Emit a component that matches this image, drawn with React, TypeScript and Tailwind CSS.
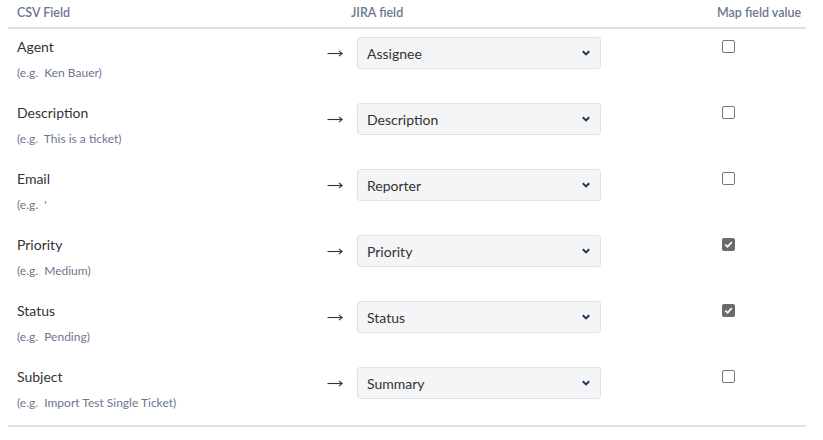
import React from "react";

type Row = {
  csv: string;
  example: string;
  jira: string;
  mapValue: boolean;
};

const rows: Row[] = [
  { csv: "Agent", example: "(e.g.  Ken Bauer)", jira: "Assignee", mapValue: false },
  { csv: "Description", example: "(e.g.  This is a ticket)", jira: "Description", mapValue: false },
  { csv: "Email", example: "(e.g.  '", jira: "Reporter", mapValue: false },
  { csv: "Priority", example: "(e.g.  Medium)", jira: "Priority", mapValue: true },
  { csv: "Status", example: "(e.g.  Pending)", jira: "Status", mapValue: true },
  { csv: "Subject", example: "(e.g.  Import Test Single Ticket)", jira: "Summary", mapValue: false },
];

const Checkbox = ({ checked }: { checked: boolean }) =>
  checked ? (
    <span className="flex h-[13px] w-[13px] items-center justify-center rounded-[2px] bg-[#6a6a6a]">
      <svg width="9" height="9" viewBox="0 0 10 10">
        <path d="M1.5 5.2 L4 7.6 L8.6 2.4" fill="none" stroke="#fff" strokeWidth="1.9" />
      </svg>
    </span>
  ) : (
    <span className="block h-[13px] w-[13px] rounded-[2px] border border-[#767676] bg-white" />
  );

const Select = ({ value }: { value: string }) => (
  <div className="flex h-[32px] w-[244px] items-center justify-between rounded-[3px] border border-[#dfe1e6] bg-[#f4f5f7] pl-[9px] pr-[9px] text-[14px] text-[#333]">
    <span>{value}</span>
    <svg width="10" height="8" viewBox="0 0 10 8">
      <path d="M1.8 2.2 L5 5.4 L8.2 2.2" fill="none" stroke="#253858" strokeWidth="2" />
    </svg>
  </div>
);

export default function App() {
  return (
    <div
      className="h-[440px] w-[823px] bg-white"
      style={{ fontFamily: '"Segoe UI", Lato, "Noto Sans", sans-serif' }}
    >
      <div className="ml-2 w-[798px]">
        <div className="flex h-[29px] items-center border-b-2 border-[#dfe1e6] text-[12.5px] font-semibold text-[#6b778c]">
          <div className="w-[334px] pl-[9px]">CSV Field</div>
          <div className="w-[366px] pl-[9px]">JIRA field</div>
          <div className="pl-[9px]">Map field value</div>
        </div>
        <div className="border-b-2 border-[#dfe1e6]">
          {rows.map((r) => (
            <div key={r.csv} className="flex h-[66px] items-start pt-[8px]">
              <div className="w-[311px] pl-[9px]">
                <div className="text-[14px] leading-[20px] text-[#333]">{r.csv}</div>
                <div className="mt-[8px] whitespace-pre text-[12px] leading-[16px] text-[#6b778c]">
                  {r.example}
                </div>
              </div>
              <div className="flex h-[32px] w-[38px] items-center pl-[8px]">
                <svg width="16" height="8" viewBox="0 0 16 8">
                  <path d="M0.5 4.5 H15" stroke="#333" strokeWidth="1.1" />
                  <path d="M12 1.8 L15.2 4.5 L12 7.2" fill="none" stroke="#333" strokeWidth="1.1" />
                </svg>
              </div>
              <Select value={r.jira} />
              <div className="ml-[121px] pt-[3px]">
                <Checkbox checked={r.mapValue} />
              </div>
            </div>
          ))}
        </div>
      </div>
    </div>
  );
}
